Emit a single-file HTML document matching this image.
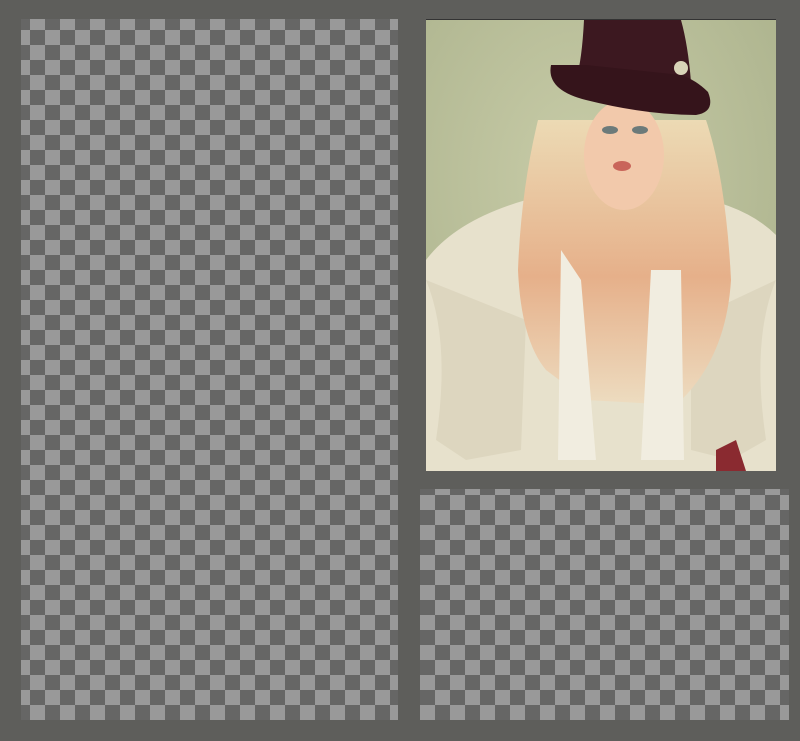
<!DOCTYPE html>
<html><head><style>
html,body{margin:0;padding:0;}
body{width:800px;height:741px;background:#5e5e5b;position:relative;overflow:hidden;}
.chk{position:absolute;background-color:#666665;
background-image:linear-gradient(45deg,#999 25%,transparent 25%,transparent 75%,#999 75%),linear-gradient(45deg,#999 25%,transparent 25%,transparent 75%,#999 75%);
background-size:30px 30px;}
#l{left:21px;top:19px;width:377px;height:701px;background-position:-21px -19px,-6px -4px;}
#r{left:420px;top:489px;width:369px;height:231px;background-position:-420px -489px,-405px -474px;}
#p{position:absolute;left:426px;top:19px;width:350px;height:451px;border-top:1px solid #333;}
</style></head><body>
<div class="chk" id="l"></div>
<div class="chk" id="r"></div>
<svg id="p" width="350" height="451" viewBox="0 0 350 451">
<defs>
<radialGradient id="bg" cx="0.45" cy="0.35" r="0.8"><stop offset="0" stop-color="#c8cca8"/><stop offset="1" stop-color="#a9b08a"/></radialGradient>
<linearGradient id="hair" x1="0" y1="0" x2="0" y2="1"><stop offset="0" stop-color="#ecdab4"/><stop offset="0.55" stop-color="#e6b08a"/><stop offset="1" stop-color="#eddcc0"/></linearGradient>
</defs>
<rect width="350" height="451" fill="url(#bg)"/>
<path d="M0 240 Q30 200 100 180 L260 175 Q320 185 350 215 L350 451 L0 451Z" fill="#e7e1cc"/>
<path d="M0 260 Q25 320 10 420 L40 440 L95 430 L100 300Z" fill="#ddd6bf"/>
<path d="M350 260 Q325 320 340 420 L305 440 L265 430 L265 300Z" fill="#ddd6bf"/>
<path d="M112 100 Q95 170 92 250 Q95 320 120 350 L160 380 L250 385 Q300 340 305 260 Q300 160 280 100Z" fill="url(#hair)"/>
<path d="M135 230 L132 440 L170 440 L155 260Z" fill="#f1ede0"/>
<path d="M225 250 L215 440 L258 440 L255 250Z" fill="#f1ede0"/>
<ellipse cx="198" cy="135" rx="40" ry="55" fill="#f2c9ab"/>
<ellipse cx="184" cy="110" rx="8" ry="4" fill="#6c7a7a"/>
<ellipse cx="214" cy="110" rx="8" ry="4" fill="#6c7a7a"/>
<ellipse cx="196" cy="146" rx="9" ry="5" fill="#c9655a"/>
<path d="M158 0 Q156 40 150 60 L265 62 Q262 25 255 0Z" fill="#3c1820"/>
<path d="M125 45 Q120 70 160 80 Q220 95 270 95 Q290 92 282 72 Q270 60 255 55 L160 45Z" fill="#35141b"/>
<circle cx="255" cy="48" r="7" fill="#d9d4b8"/>
<path d="M290 430 L310 420 L320 451 L290 451Z" fill="#8a2a30"/>
</svg>
</body></html>
